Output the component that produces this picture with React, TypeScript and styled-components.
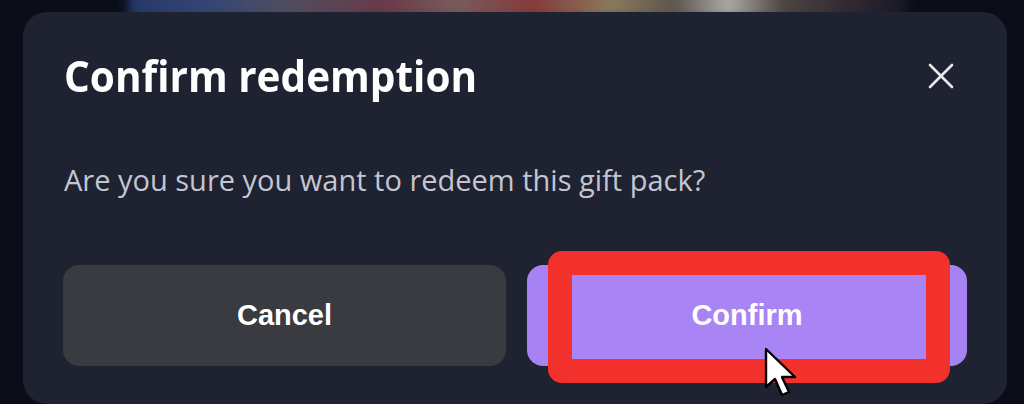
import React from "react";
import styled, { createGlobalStyle } from "styled-components";

const Global = createGlobalStyle`
  html, body { margin: 0; padding: 0; background: #0a0d17; }
  body { width: 1024px; height: 404px; overflow: hidden; }
  * { box-sizing: border-box; }
`;

const Page = styled.div`
  position: relative;
  width: 1024px;
  height: 404px;
  background: #0a0d17;
  display: flex;
  flex-direction: column;
  padding: 12px 17px 0 23px;
  overflow: hidden;
`;

const Backdrop = styled.div`
  position: absolute;
  left: 128px;
  top: -20px;
  width: 780px;
  height: 40px;
  background: linear-gradient(
    90deg,
    #2c3f7a 0%,
    #3b4f86 10%,
    #5d5a6e 20%,
    #7a4250 33%,
    #8c6a6a 42%,
    #9c4240 52%,
    #a08d6c 62%,
    #6c6258 70%,
    #c8c4c0 77%,
    #58504a 84%,
    #3a3038 92%,
    #1a1a2a 100%
  );
  filter: blur(6px);
  opacity: 0.85;
`;

const Dialog = styled.div`
  position: relative;
  flex: 1;
  background: #1f2230;
  border-radius: 24px;
  padding: 36px 40px 0 41px;
  display: flex;
  flex-direction: column;
`;

const Header = styled.div`
  display: flex;
  align-items: center;
  justify-content: space-between;
  height: 56px;
`;

const Title = styled.h2`
  margin: 0;
  font-family: "Open Sans", "Noto Sans", sans-serif;
  font-weight: 700;
  font-size: 40.5px;
  line-height: 56px;
  color: #ffffff;
  letter-spacing: 0;
  transform: scaleY(1.04);
  transform-origin: left center;
`;

const CloseButton = styled.button`
  width: 40px;
  height: 40px;
  margin-right: 6px;
  border: none;
  background: transparent;
  padding: 0;
  display: flex;
  align-items: center;
  justify-content: center;
  color: #e8e9ee;
`;

const Message = styled.p`
  margin: 56px 0 0 0;
  font-family: "Open Sans", "Noto Sans", sans-serif;
  font-weight: 400;
  font-size: 29px;
  line-height: 40px;
  color: #c3c6d2;
  letter-spacing: 0;
`;

const Actions = styled.div`
  display: grid;
  grid-template-columns: 443px 440px;
  gap: 21px;
  margin-top: 65px;
  margin-left: -1px;
`;

const Button = styled.button<{ $variant: "secondary" | "primary" }>`
  position: relative;
  height: 101px;
  border: none;
  border-radius: 16px;
  font-family: "Liberation Sans", Arial, sans-serif;
  font-weight: 700;
  font-size: 29px;
  color: #ffffff;
  background: ${(p) => (p.$variant === "primary" ? "#a682f3" : "#3a3a41")};
  display: flex;
  align-items: center;
  justify-content: center;
  padding: 0;
`;

const Label = styled.span`
  position: relative;
  z-index: 2;
`;

const Highlight = styled.div`
  position: absolute;
  left: 21px;
  right: 17px;
  top: -14px;
  bottom: -17px;
  border: 24px solid #f2302c;
  border-radius: 14px;
  background: #a884f5;
  z-index: 1;
`;

const Cursor = styled.svg`
  position: absolute;
  left: 237px;
  top: 82px;
  z-index: 3;
`;

export default function App() {
  return (
    <>
      <Global />
      <Page>
        <Backdrop />
        <Dialog>
          <Header>
            <Title>Confirm redemption</Title>
            <CloseButton aria-label="Close">
              <svg width="26" height="26" viewBox="0 0 26 26">
                <path
                  d="M2 2 L24 24 M24 2 L2 24"
                  stroke="currentColor"
                  strokeWidth="2.6"
                  strokeLinecap="round"
                />
              </svg>
            </CloseButton>
          </Header>
          <Message>Are you sure you want to redeem this gift pack?</Message>
          <Actions>
            <Button $variant="secondary">
              <Label>Cancel</Label>
            </Button>
            <Button $variant="primary">
              <Highlight />
              <Label>Confirm</Label>
              <Cursor width="38" height="52" viewBox="0 0 38 52">
                <path
                  d="M2 2 L2 40 L11 32 L18 48 L25 45 L18 30 L31 30 Z"
                  fill="#ffffff"
                  stroke="#000000"
                  strokeWidth="2.4"
                  strokeLinejoin="round"
                />
              </Cursor>
            </Button>
          </Actions>
        </Dialog>
      </Page>
    </>
  );
}
